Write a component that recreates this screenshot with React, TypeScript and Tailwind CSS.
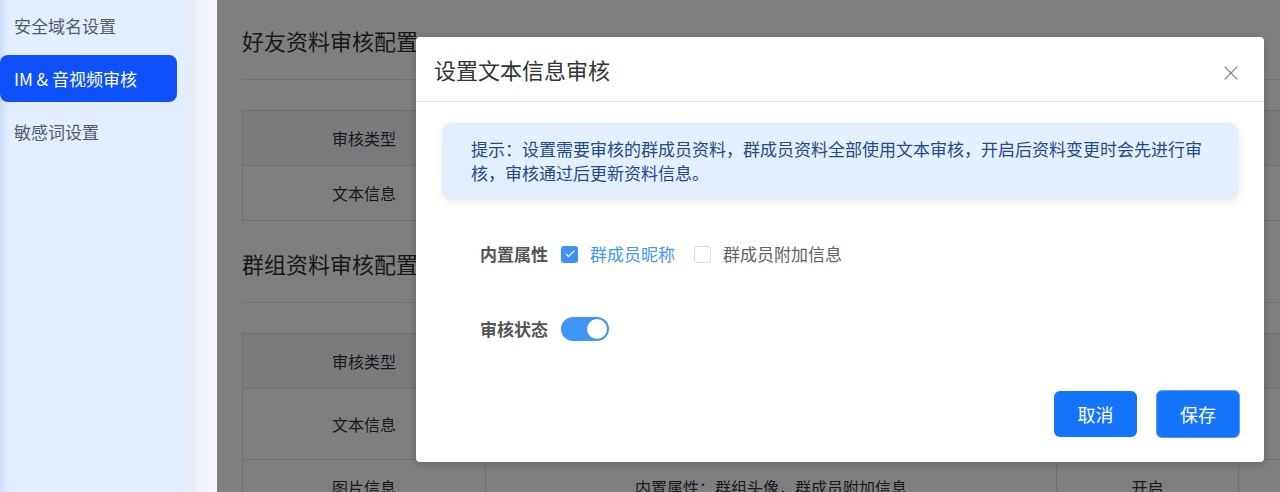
import { Check, X } from "lucide-react";

const menu = [
  { label: "安全域名设置", active: false },
  { label: "IM & 音视频审核", active: true },
  { label: "敏感词设置", active: false },
];

interface Row {
  type: string;
  content: string;
  status: string;
  height: string;
}

// cells hidden behind the dialog are left empty
const friendRows: Row[] = [{ type: "文本信息", content: "", status: "", height: "h-[55px]" }];

const groupRows: Row[] = [
  { type: "文本信息", content: "", status: "", height: "h-[71px]" },
  { type: "图片信息", content: "内置属性：群组头像，群成员附加信息", status: "开启", height: "h-[55px]" },
];

function ConfigTable({ rows }: { rows: Row[] }) {
  return (
    <table className="mt-[30px] w-[1196px] table-fixed border-collapse text-[16px] text-[#333]">
      <colgroup>
        <col className="w-[243px]" />
        <col className="w-[571px]" />
        <col className="w-[182px]" />
        <col className="w-[200px]" />
      </colgroup>
      <thead>
        <tr className="h-[55px] bg-[#f5f6f8]">
          <th className="border border-[#dfe1e6] font-normal">审核类型</th>
          <th className="border border-[#dfe1e6] font-normal" />
          <th className="border border-[#dfe1e6] font-normal" />
          <th className="border border-[#dfe1e6] font-normal" />
        </tr>
      </thead>
      <tbody>
        {rows.map((r) => (
          <tr key={r.type} className={r.height}>
            <td className="border border-[#dfe1e6] text-center">{r.type}</td>
            <td className="border border-[#dfe1e6] text-center">{r.content}</td>
            <td className="border border-[#dfe1e6] text-center">{r.status}</td>
            <td className="border border-[#dfe1e6] text-center" />
          </tr>
        ))}
      </tbody>
    </table>
  );
}

export default function App() {
  return (
    <div className="relative flex h-[492px] w-full overflow-hidden bg-white font-['Noto_Sans_CJK_SC','Noto_Sans',sans-serif]">
      {/* sidebar */}
      <aside className="flex h-full w-[188px] shrink-0 flex-col gap-[6px] bg-[linear-gradient(to_right,#cbdbfb_0px,#e2eefe_9px)] pt-[2px]">
        {menu.map((m) => (
          <div
            key={m.label}
            className={
              m.active
                ? "flex h-[47px] w-[177px] items-center rounded-[8px] bg-[#0e50fb] pl-[14px] text-[17px] text-white"
                : "flex h-[47px] w-[177px] items-center pl-[14px] text-[17px] text-[#555b66]"
            }
          >
            {m.label}
          </div>
        ))}
      </aside>
      <div className="h-full w-[29px] shrink-0 bg-[linear-gradient(to_right,#e3e8f1,#f2f5fc_45%,#f5f8fe)]" />

      {/* main content */}
      <main className="relative h-full flex-1 overflow-hidden pl-[25px]">
        <h2 className="mt-[26px] w-[1196px] border-b border-[#e4e7ed] pb-[25px] text-[22px] leading-[28px] text-[#333]">
          好友资料审核配置
        </h2>
        <ConfigTable rows={friendRows} />

        <h2 className="mt-[28px] w-[1196px] border-b border-[#e4e7ed] pb-[25px] text-[22px] leading-[28px] text-[#333]">
          群组资料审核配置
        </h2>
        <ConfigTable rows={groupRows} />

        <div className="absolute inset-0 bg-black/50" />
      </main>

      {/* dialog */}
      <div className="absolute left-[416px] top-[37px] z-10 flex h-[425px] w-[848px] flex-col rounded-[4px] bg-white shadow-[0_2px_10px_rgba(0,0,0,0.2)]">
        <div className="flex h-[65px] shrink-0 items-center justify-between border-b border-[#e6e6e6] pl-[18px] pr-[21px]">
          <span className="text-[22px] text-[#333]">设置文本信息审核</span>
          <X size={24} strokeWidth={1.2} className="mt-[7px] text-[#8c8c8c]" />
        </div>

        <div className="pl-[26px] pr-[25px] pt-[21px]">
          <div className="rounded-[10px] bg-[#e3effd] px-[29px] pb-[15px] pt-[14px] text-[17px] leading-[24px] text-[#1f4b89] shadow-[0_2px_8px_rgba(0,0,0,0.08)]">
            <span className="whitespace-nowrap">
              提示：设置需要审核的群成员资料，群成员资料全部使用文本审核，开启后资料变更时会先进行审
            </span>
            <br />
            <span className="whitespace-nowrap">核，审核通过后更新资料信息。</span>
          </div>

          <div className="mt-[34px] flex h-[40px] items-center pl-[38px]">
            <span className="w-[81px] text-[17px] font-bold text-[#555]">内置属性</span>
            <label className="flex items-center gap-[12px]">
              <span className="flex h-[17px] w-[17px] items-center justify-center rounded-[3px] bg-[#3f90f7]">
                <Check size={12} strokeWidth={2.2} className="text-white" />
              </span>
              <span className="text-[17px] text-[#4096f6]">群成员昵称</span>
            </label>
            <label className="ml-[19px] flex items-center gap-[12px]">
              <span className="h-[17px] w-[17px] rounded-[3px] border border-[#d9dce3] bg-white" />
              <span className="text-[17px] text-[#606266]">群成员附加信息</span>
            </label>
          </div>

          <div className="mt-[35px] flex h-[40px] items-center pl-[38px]">
            <span className="w-[81px] text-[17px] font-bold text-[#555]">审核状态</span>
            <span className="flex h-[24px] w-[48px] items-center justify-end rounded-full bg-[#4096f7] p-[2px]">
              <span className="h-[20px] w-[20px] rounded-full bg-white" />
            </span>
          </div>
        </div>

        <div className="mt-auto flex items-center justify-end gap-[19px] pb-[24px] pr-[24px]">
          <button className="h-[46px] w-[83px] rounded-[6px] bg-[#1474fb] text-[18px] text-white">取消</button>
          <button className="h-[48px] w-[84px] rounded-[6px] border border-[#5a9bff] bg-[#1474fb] text-[18px] text-white">
            保存
          </button>
        </div>
      </div>
    </div>
  );
}
